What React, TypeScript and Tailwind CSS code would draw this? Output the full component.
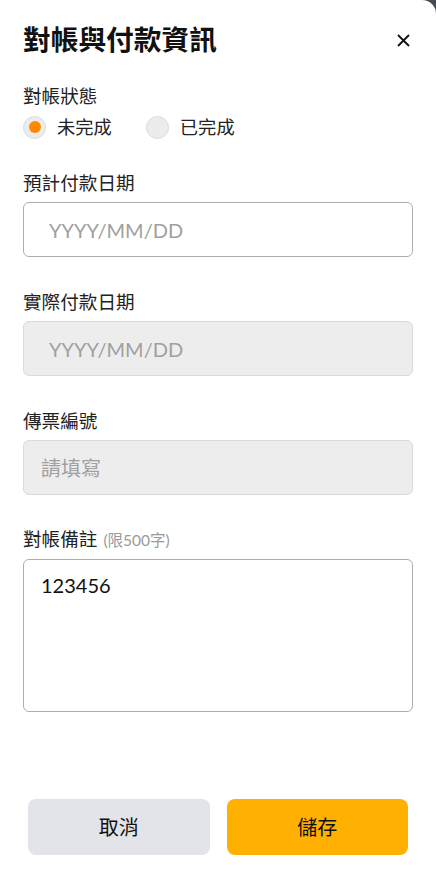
import { useState } from "react";

const font = { fontFamily: '"Lato", "Noto Sans CJK TC", sans-serif' };

function Label({ children, note }: { children: string; note?: string }) {
  return (
    <div className="text-[18.6px] leading-[24px] text-[#222]">
      {children}
      {note && <span className="ml-[6px] text-[15.5px] text-[#9a9a9a]">{note}</span>}
    </div>
  );
}

function Radio({ label, checked, onClick }: { label: string; checked: boolean; onClick: () => void }) {
  return (
    <button onClick={onClick} className="flex items-center gap-[11px]">
      <span className="flex h-[23px] w-[23px] items-center justify-center rounded-full border border-[#dcdcdc] bg-[#ececec]">
        {checked && <span className="h-[12px] w-[12px] rounded-full bg-[#ff8a00]" />}
      </span>
      <span className="text-[18.3px] leading-[24px] text-[#222]">{label}</span>
    </button>
  );
}

export default function App() {
  const [status, setStatus] = useState("pending");

  return (
    <div className="h-[878px] w-full bg-[#474b53]" style={font}>
      <div className="flex h-full flex-col rounded-tr-[14px] bg-white px-[23px] pt-[22px] pb-[23px]">
        <div className="flex items-center justify-between">
          <h1 className="text-[27.7px] leading-[36px] font-bold text-[#111]">對帳與付款資訊</h1>
          <button className="mr-[3px] text-[#111]">
            <svg width="13" height="13" viewBox="0 0 13 13" fill="none" stroke="currentColor" strokeWidth="1.8">
              <path d="M1 1L12 12M12 1L1 12" />
            </svg>
          </button>
        </div>

        <div className="mt-[26px]">
          <Label>對帳狀態</Label>
          <div className="mt-[7px] flex items-center gap-[34px]">
            <Radio label="未完成" checked={status === "pending"} onClick={() => setStatus("pending")} />
            <Radio label="已完成" checked={status === "done"} onClick={() => setStatus("done")} />
          </div>
        </div>

        <div className="mt-[32px]">
          <Label>預計付款日期</Label>
          <input
            readOnly
            placeholder="YYYY/MM/DD"
            className="mt-[7px] block h-[55px] w-full rounded-[6px] border border-[#adadad] bg-white pl-[25px] text-[20px] outline-none placeholder:text-[#a0a0a0]"
          />
        </div>

        <div className="mt-[33px]">
          <Label>實際付款日期</Label>
          <input
            disabled
            placeholder="YYYY/MM/DD"
            className="mt-[7px] block h-[55px] w-full rounded-[6px] border border-[#dadada] bg-[#ededed] pl-[25px] text-[20px] outline-none placeholder:text-[#a0a0a0]"
          />
        </div>

        <div className="mt-[33px]">
          <Label>傳票編號</Label>
          <input
            disabled
            placeholder="請填寫"
            className="mt-[7px] block h-[55px] w-full rounded-[6px] border border-[#dadada] bg-[#ededed] pl-[17px] text-[20px] outline-none placeholder:text-[#a0a0a0]"
          />
        </div>

        <div className="mt-[32px]">
          <Label note="(限500字)">對帳備註</Label>
          <textarea
            defaultValue="123456"
            className="mt-[7px] block h-[153px] w-full resize-none rounded-[6px] border border-[#adadad] px-[17px] pt-[11px] text-[20px] leading-[28px] text-[#111] outline-none"
          />
        </div>

        <div className="mt-auto flex gap-[17px] px-[5px]">
          <button className="h-[56px] flex-1 rounded-[8px] bg-[#e3e4e9] text-[20px] text-[#111]">取消</button>
          <button className="h-[56px] flex-1 rounded-[8px] bg-[#ffb000] text-[20px] text-[#111]">儲存</button>
        </div>
      </div>
    </div>
  );
}
